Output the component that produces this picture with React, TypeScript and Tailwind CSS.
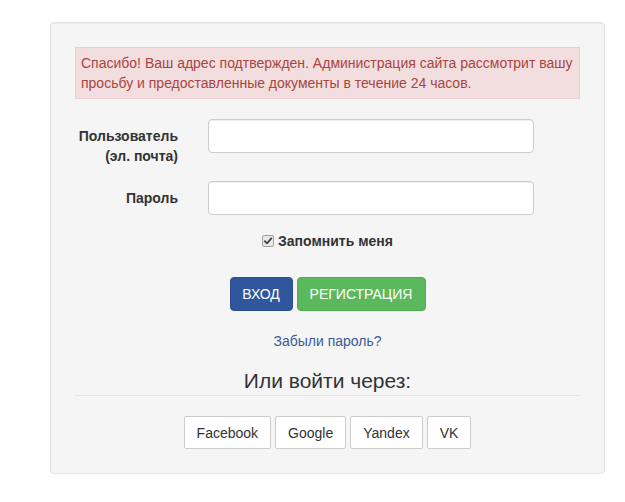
import React from "react";

export default function App() {
  return (
    <div
      className="w-[625px] h-[502px] bg-white pt-[22px] pl-[50px] text-[14px] leading-[20px] text-[#333]"
      style={{ fontFamily: '"Liberation Sans", Arial, sans-serif' }}
    >
      <div className="w-[555px] bg-[#f5f5f5] border border-[#e3e3e3] rounded-[4px] shadow-[inset_0_1px_1px_rgba(0,0,0,0.05)] px-[24px] pt-[24px] pb-[24px]">
        <div className="border border-[#ebccd1] bg-[#f2dede] text-[#a94442] px-[5px] py-[5px]">
          Спасибо! Ваш адрес подтвержден. Администрация сайта рассмотрит вашу просьбу и предоставленные документы в течение 24 часов.
        </div>

        <div className="mt-[20px] flex items-start">
          <label className="w-[103px] text-right font-bold pt-[7px]">
            Пользователь
            <br />
            (эл. почта)
          </label>
          <input
            type="text"
            className="ml-[30px] w-[326px] h-[34px] bg-white border border-[#ccc] rounded-[4px] shadow-[inset_0_1px_1px_rgba(0,0,0,0.075)] outline-none"
          />
        </div>

        <div className="mt-[15px] flex items-start">
          <label className="w-[103px] text-right font-bold pt-[7px]">Пароль</label>
          <input
            type="password"
            className="ml-[30px] w-[326px] h-[34px] bg-white border border-[#ccc] rounded-[4px] shadow-[inset_0_1px_1px_rgba(0,0,0,0.075)] outline-none"
          />
        </div>

        <div className="mt-[16px] h-[20px] flex items-center justify-center">
          <span className="w-[12px] h-[12px] border border-[#a0a0a0] bg-[#e8e8e8] rounded-[2px] flex items-center justify-center mr-[4px]">
            <svg width="10" height="10" viewBox="0 0 10 10">
              <path d="M1.8 5.2 L4 7.4 L8.3 2.4" fill="none" stroke="#444" strokeWidth="1.8" strokeLinecap="round" strokeLinejoin="round" />
            </svg>
          </span>
          <span className="font-bold">Запомнить меня</span>
        </div>

        <div className="mt-[26px] flex justify-center gap-[4px]">
          <button className="w-[63px] h-[34px] bg-[#30579e] border border-[#2b4f90] rounded-[4px] text-white text-[14px]">
            ВХОД
          </button>
          <button className="w-[129px] h-[34px] bg-[#5cb85c] border border-[#4cae4c] rounded-[4px] text-white text-[14px]">
            РЕГИСТРАЦИЯ
          </button>
        </div>

        <div className="mt-[20px] text-center text-[#3b5998]">Забыли пароль?</div>

        <div className="mt-[16px] text-center text-[21px] leading-[28px] text-[#333] border-b border-[#e5e5e5]">
          Или войти через:
        </div>

        <div className="mt-[20px] flex justify-center gap-[4px]">
          {["Facebook", "Google", "Yandex", "VK"].map((s) => (
            <button
              key={s}
              className="h-[33px] px-[12px] bg-white border border-[#ccc] rounded-[2px] text-[#333] text-[14px]"
            >
              {s}
            </button>
          ))}
        </div>
      </div>
    </div>
  );
}
